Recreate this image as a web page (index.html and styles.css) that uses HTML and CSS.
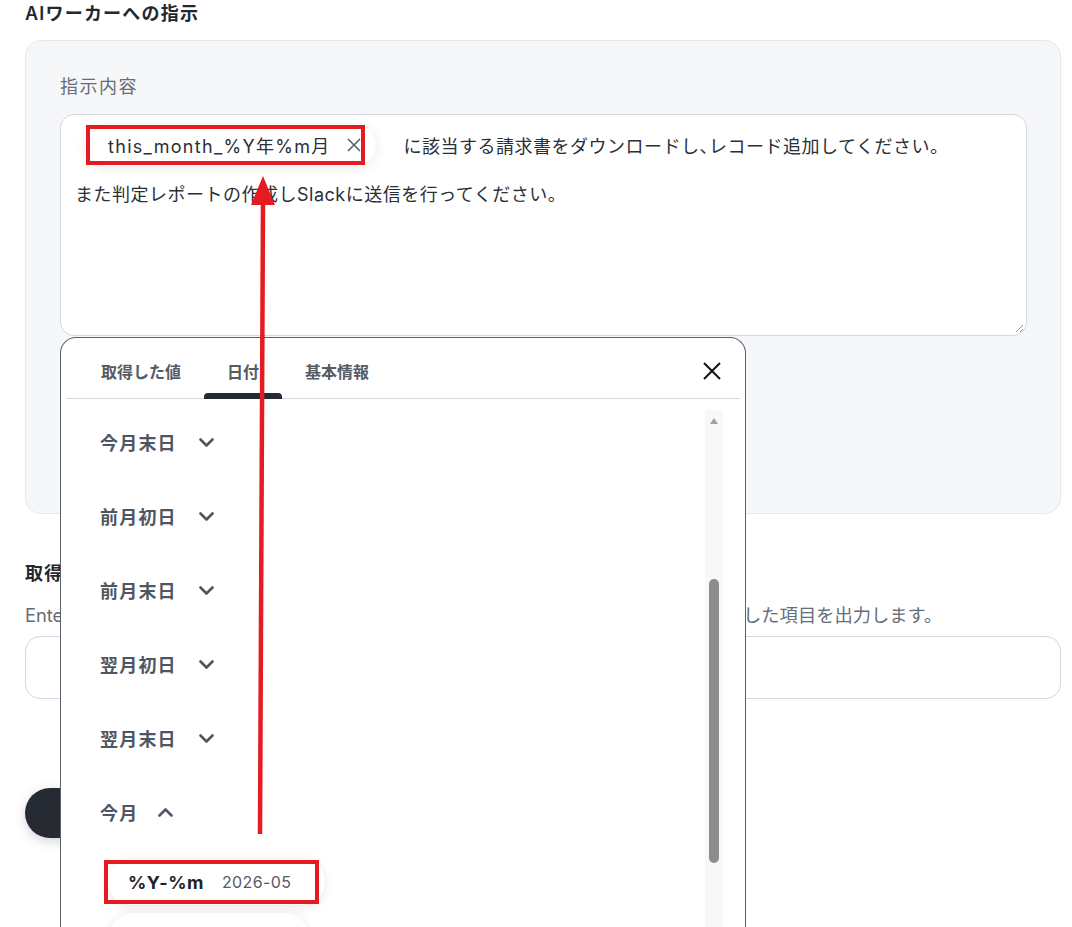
FILE: index.html
```html
<!doctype html>
<html lang="ja">
  <head>
    <meta charset="UTF-8" />
    <meta name="viewport" content="width=device-width, initial-scale=1.0" />
    <title>AIワーカー設定</title>
    <link rel="stylesheet" href="styles.css">
  </head>
  <body>
    <div class="page">
      <h2 class="section-title">AIワーカーへの指示</h2>

      <div class="panel">
        <div class="field-label">指示内容</div>
        <div class="editor">
          <div class="editor-line">
            <span class="var-chip">
              <span class="var-name">this_month_%Y年%m月</span>
              <svg class="chip-remove" width="14" height="14" viewBox="0 0 14 14">
                <path d="M1 1L13 13M13 1L1 13" stroke="#5a6069" stroke-width="1.6" fill="none" />
              </svg>
              <span class="mark mark-var"></span>
            </span>
            <span>に該当する請求書をダウンロードし<span class="half">、</span>レコード追加してください。</span>
          </div>
          <div class="editor-line">また判定レポートの作成しSlackに送信を行ってください。</div>
          <!-- resize grip -->
          <svg class="grip" width="9" height="9" viewBox="0 0 9 9">
            <path d="M8 1L1 8M8 5L5 8" stroke="#8a8f97" stroke-width="1" fill="none" />
          </svg>
        </div>
      </div>

      <h2 class="section-title sub">取得したい項目</h2>
      <p class="field-help">Enterキーで区切って取得したい項目名を入力すると、AIワーカーが指示の内容から抽出した項目を出力します。</p>
      <div class="text-input"></div>

      <button class="save-btn">保存する</button>

      <!-- 変数ピッカー -->
      <div class="picker">
        <div class="picker-tabs">
          <button class="tab">取得した値</button>
          <button class="tab active">日付</button>
          <button class="tab">基本情報</button>
          <svg class="picker-close" width="18" height="18" viewBox="0 0 18 18">
            <path d="M1 1L17 17M17 1L1 17" stroke="#111" stroke-width="2" fill="none" />
          </svg>
        </div>

        <div class="picker-body">
          <ul class="date-list">
            <li class="date-group">
              <span>今月末日</span>
              <svg class="chev" width="15" height="9" viewBox="0 0 15 9"><path d="M1.5 1.5L7.5 7.5L13.5 1.5" /></svg>
            </li>
            <li class="date-group">
              <span>前月初日</span>
              <svg class="chev" width="15" height="9" viewBox="0 0 15 9"><path d="M1.5 1.5L7.5 7.5L13.5 1.5" /></svg>
            </li>
            <li class="date-group">
              <span>前月末日</span>
              <svg class="chev" width="15" height="9" viewBox="0 0 15 9"><path d="M1.5 1.5L7.5 7.5L13.5 1.5" /></svg>
            </li>
            <li class="date-group">
              <span>翌月初日</span>
              <svg class="chev" width="15" height="9" viewBox="0 0 15 9"><path d="M1.5 1.5L7.5 7.5L13.5 1.5" /></svg>
            </li>
            <li class="date-group">
              <span>翌月末日</span>
              <svg class="chev" width="15" height="9" viewBox="0 0 15 9"><path d="M1.5 1.5L7.5 7.5L13.5 1.5" /></svg>
            </li>
            <li class="date-group open">
              <span>今月</span>
              <svg class="chev" width="15" height="9" viewBox="0 0 15 9"><path d="M1.5 7.5L7.5 1.5L13.5 7.5" /></svg>
            </li>
            <li class="format-row">
              <span class="format-chip">
                <b>%Y-%m</b><span class="format-sample">2026-05</span>
                <span class="mark mark-format"></span>
              </span>
            </li>
            <li class="format-row">
              <span class="format-chip narrow">
                <b>%Y%m</b><span class="format-sample">202605</span>
              </span>
            </li>
          </ul>

          <div class="scroll-track">
            <span class="scroll-up"></span>
            <span class="scroll-thumb"></span>
          </div>
        </div>
      </div>

      <!-- guide arrow -->
      <svg class="guide-arrow" width="1072" height="927" viewBox="0 0 1072 927">
        <line x1="260" y1="834" x2="263" y2="200" stroke="#e41b22" stroke-width="4.5" />
        <polygon points="263,176 251,205 275,205" fill="#e41b22" />
      </svg>
    </div>
  </body>
</html>
```

FILE: styles.css
```css
* {
  box-sizing: border-box;
}

html,
body {
  margin: 0;
  padding: 0;
  overflow: hidden;
}

body {
  background-color: #fff;
  color: #1f2328;
  font-family: "Inter", "Noto Sans CJK JP", sans-serif;
}

.page {
  position: relative;
  height: 927px;
  padding: 0 11px 0 25px;
}

.section-title {
  margin: 0;
  font-size: 18px;
  font-weight: 600;
  line-height: 28px;
  letter-spacing: 1.2px;
  color: #24282e;
}

.section-title.sub {
  margin-top: 46px;
}

.panel {
  margin-top: 12px;
  background-color: #f6f7f9;
  border: 1px solid #e6e8ec;
  border-radius: 16px;
  padding: 34px 33px 177px 34px;
}

.field-label {
  font-size: 18px;
  line-height: 24px;
  color: #676d77;
  letter-spacing: 1.5px;
}

.editor {
  position: relative;
  margin-top: 15px;
  height: 222px;
  background-color: #fff;
  border: 1px solid #d3d7de;
  border-radius: 14px;
  padding: 6px 14px;
  font-size: 18px;
  letter-spacing: 0.5px;
  color: #2b2f36;
}

.editor-line {
  display: flex;
  align-items: center;
  height: 48px;
  white-space: nowrap;
}

/* half-width comma inside running text */
.half {
  font-feature-settings: "halt";
}

.var-chip {
  position: relative;
  display: inline-flex;
  align-items: center;
  gap: 16px;
  height: 42px;
  margin: 0 28px 0 10px;
  padding: 0 15px 0 23px;
  border-radius: 21px;
  background-color: #fff;
  box-shadow: 0 2px 12px rgba(0, 0, 0, 0.09);
}

.var-name {
  letter-spacing: 1.3px;
}

.chip-remove {
  display: block;
}

/* red callout frames */
.mark {
  position: absolute;
  border: 4px solid #e41b22;
  pointer-events: none;
}

.mark-var {
  left: 1px;
  top: 1px;
  right: 11px;
  bottom: 1px;
}

.grip {
  position: absolute;
  right: 2px;
  bottom: 2px;
}

.field-help {
  margin: 14px 0 0;
  font-size: 18.3px;
  line-height: 26px;
  color: #676d77;
  white-space: nowrap;
}

.text-input {
  margin-top: 8px;
  height: 63px;
  border: 1px solid #d3d7de;
  border-radius: 15px;
}

.save-btn {
  display: block;
  margin-top: 89px;
  width: 180px;
  height: 50px;
  border: 0;
  border-radius: 25px;
  background-color: #262a32;
  color: #fff;
  font-family: inherit;
  font-size: 16px;
  font-weight: 700;
  box-shadow: 0 3px 12px rgba(0, 0, 0, 0.18);
}

/* picker popover */
.picker {
  position: absolute;
  left: 60px;
  top: 337px;
  width: 686px;
  height: 600px;
  background-color: #fff;
  border: 1px solid #59606a;
  border-bottom: 0;
  border-radius: 16px 16px 0 0;
  padding: 0 5px;
  z-index: 5;
}

.picker-tabs {
  display: flex;
  height: 61px;
  padding-left: 12px;
  border-bottom: 1px solid #d5d9e0;
}

.tab {
  position: relative;
  display: flex;
  align-items: center;
  padding: 6px 23px 0;
  border: 0;
  background: none;
  font-family: inherit;
  font-size: 16px;
  font-weight: 600;
  color: #555b64;
}

.tab.active::after {
  content: "";
  position: absolute;
  left: 0;
  right: 0;
  bottom: -1px;
  height: 6px;
  background-color: #252a31;
  border-radius: 4px 4px 0 0;
}

.picker-close {
  align-self: center;
  margin: 6px 19px 0 auto;
}

.picker-body {
  display: flex;
  height: 540px;
}

.date-list {
  flex: 1;
  list-style: none;
  margin: 0;
  padding: 6px 0 0 34px;
}

.date-group {
  display: flex;
  align-items: center;
  gap: 22px;
  height: 74px;
  font-size: 18px;
  font-weight: 600;
  letter-spacing: 1.2px;
  color: #4f5661;
}

.date-group.open {
  gap: 20px;
}

.chev {
  display: block;
}

.chev path {
  fill: none;
  stroke: #4f5661;
  stroke-width: 2.6;
  stroke-linecap: round;
  stroke-linejoin: round;
}

.format-row {
  padding-left: 8px;
  margin-top: 10px;
}

.format-row + .format-row {
  margin-top: 8px;
}

.format-chip {
  position: relative;
  display: inline-flex;
  align-items: center;
  gap: 18px;
  height: 46px;
  min-width: 217px;
  padding: 0 20px;
  border-radius: 23px;
  background-color: #fff;
  box-shadow: 0 2px 12px rgba(0, 0, 0, 0.1);
}

.format-chip.narrow {
  min-width: 198px;
  margin-left: 2px;
}

.format-chip b {
  font-size: 18px;
  font-weight: 700;
  color: #1f2328;
  letter-spacing: 0.5px;
}

.format-sample {
  font-size: 16px;
  color: #555b64;
  letter-spacing: 0.4px;
}

.mark-format {
  left: -4px;
  top: 1px;
  right: 6px;
  bottom: 1px;
}

.scroll-track {
  position: relative;
  width: 18px;
  margin: 11px 17px 0 0;
  background-color: #f8f8f8;
}

.scroll-up {
  position: absolute;
  top: 8px;
  left: 5px;
  border-left: 4px solid transparent;
  border-right: 4px solid transparent;
  border-bottom: 6px solid #a0a0a0;
}

.scroll-thumb {
  position: absolute;
  top: 169px;
  left: 4px;
  width: 10px;
  height: 284px;
  border-radius: 5px;
  background-color: #8c8c8c;
}

.guide-arrow {
  position: absolute;
  left: 0;
  top: 0;
  z-index: 10;
  pointer-events: none;
}
```
